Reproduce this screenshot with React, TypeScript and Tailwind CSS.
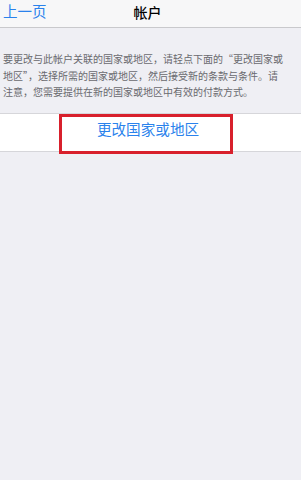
import React from "react";

const font = '"Noto Sans CJK SC", "Noto Sans", sans-serif';

export default function App() {
  return (
    <div
      className="w-[301px] h-[480px] bg-[#efeff4] flex flex-col overflow-hidden"
      style={{ fontFamily: font }}
    >
      <div className="relative h-[28px] shrink-0 bg-[#f7f7f8] border-b border-[#c9c9cc] flex items-center">
        <span className="pl-[3px] text-[14.5px] leading-none text-[#2a82ec] pb-[4px]">上一页</span>
        <span className="absolute left-0 right-0 text-center text-[14px] leading-none font-medium text-black pb-[4px]">
          <span className="mr-[6px]">帐户</span>
        </span>
      </div>
      <div className="pt-[23px] px-[3px] text-[10px] leading-[16.5px] text-[#6a6a6f]">
        <div className="whitespace-nowrap">要更改与此帐户关联的国家或地区，请轻点下面的“更改国家或</div>
        <div className="whitespace-nowrap">地区”，选择所需的国家或地区，然后接受新的条款与条件。请</div>
        <div className="whitespace-nowrap">注意，您需要提供在新的国家或地区中有效的付款方式。</div>
      </div>
      <div className="relative mt-[12px] h-[39px] bg-white border-y border-[#d6d6da] flex items-center justify-center">
        <span className="text-[14.6px] leading-none text-[#2a82ec] pb-[6px] mr-[5px]">更改国家或地区</span>
        <div className="absolute left-[59px] top-[0px] w-[174px] h-[40px] border-[3px] border-[#d8202c]" />
      </div>
    </div>
  );
}
